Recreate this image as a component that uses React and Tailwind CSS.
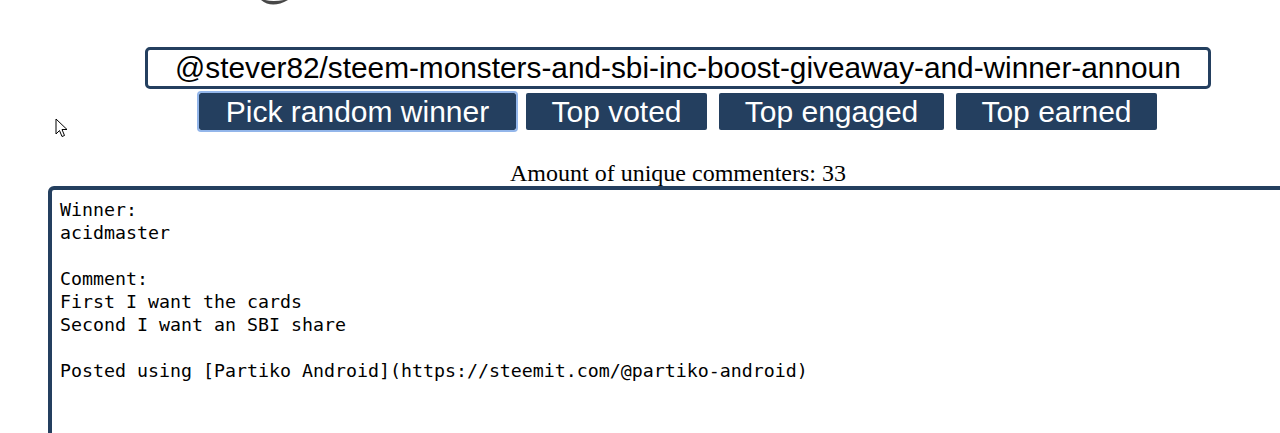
import React from "react";

export default function App() {
  const lines = [
    "Winner:",
    "acidmaster",
    "",
    "Comment:",
    "First I want the cards",
    "Second I want an SBI share",
    "",
    "Posted using [Partiko Android](https://steemit.com/@partiko-android)",
  ];
  return (
    <div className="relative w-[1280px] h-[433px] overflow-hidden bg-white">
      <div className="w-[1356px] flex flex-col items-center">
        <div className="self-stretch h-[47px] pl-[260px]">
          <svg width="30" height="6" viewBox="0 0 30 6" className="block">
            <path d="M1 0 Q 12 9 28 0 L 24 0 Q 13 2 5 0 Z" fill="#333333" opacity="0.9" />
          </svg>
        </div>
        <input
          readOnly
          value="@stever82/steem-monsters-and-sbi-inc-boost-giveaway-and-winner-announcement"
          className="w-[1066px] h-[42px] border-[3px] border-[#243f5f] rounded-[5px] px-[27px] text-[29.8px] text-black bg-white outline-none"
          style={{ fontFamily: '"Liberation Sans", Arial, sans-serif' }}
        />
        <div
          className="flex mt-[4px] h-[37px] text-white text-[30px] leading-[37px]"
          style={{ fontFamily: '"Liberation Sans", Arial, sans-serif' }}
        >
          <div className="w-[317px] h-[37px] mr-[10px] bg-[#243f5f] text-center rounded-[2px] outline-2 outline-offset-[0px] outline-[#93b6ea]">
            Pick random winner
          </div>
          <div className="w-[181px] h-[37px] mr-[12px] bg-[#243f5f] text-center rounded-[2px]">
            Top voted
          </div>
          <div className="w-[225px] h-[37px] mr-[12px] bg-[#243f5f] text-center rounded-[2px]">
            Top engaged
          </div>
          <div className="w-[201px] h-[37px] bg-[#243f5f] text-center rounded-[2px]">
            Top earned
          </div>
        </div>
        <div
          className="h-[56px] pt-[31px] text-[24px] leading-[24px] text-black"
          style={{ fontFamily: '"Liberation Serif", "Times New Roman", serif' }}
        >
          Amount of unique commenters: 33
        </div>
        <div className="self-start ml-[48px] w-[1260px] h-[300px] border-[4px] border-[#243f5f] rounded-[6px] pl-[8px] pt-[8px]">
          <div
            className="whitespace-pre text-black text-[18.27px] leading-[23px]"
            style={{ fontFamily: '"DejaVu Sans Mono", monospace' }}
          >
            {lines.map((l, i) => (
              <div key={i} className="h-[23px]">{l}</div>
            ))}
          </div>
        </div>
      </div>
      <svg
        className="absolute left-[55px] top-[118px]"
        width="14"
        height="21"
        viewBox="0 0 14 21"
      >
        <path
          d="M1 1 L1 16 L4.5 12.5 L7 18.5 L9.5 17.5 L7 11.5 L12 11.5 Z"
          fill="white"
          stroke="black"
          strokeWidth="1"
          strokeLinejoin="round"
        />
      </svg>
    </div>
  );
}
